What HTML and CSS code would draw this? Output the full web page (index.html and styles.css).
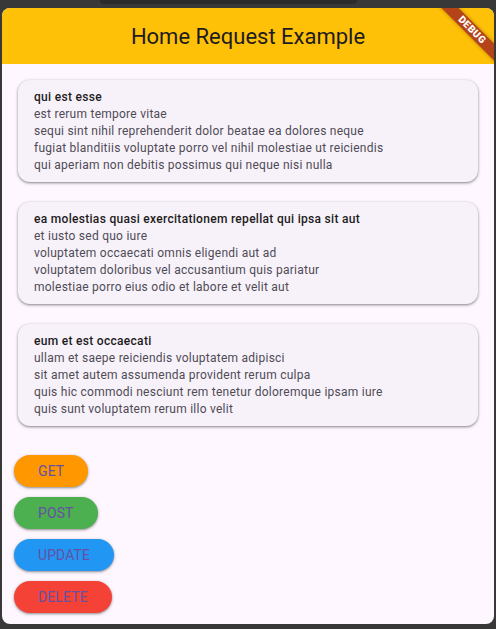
FILE: index.html
```html
<!DOCTYPE html>
<html>
<head>
<meta charset="utf-8">
<link rel="stylesheet" href="styles.css">
</head>
<body>
<div class="backdrop">
  <div class="topstrip"><div class="notch"></div></div>
  <div class="window">
    <header class="appbar">
      <h1 class="title">Home Request Example</h1>
      <div class="banner">DEBUG</div>
    </header>
    <main class="content">
      <section class="cards">
        <article class="card">
          <div class="card-title">qui est esse</div>
          <div class="card-body">est rerum tempore vitae<br>sequi sint nihil reprehenderit dolor beatae ea dolores neque<br>fugiat blanditiis voluptate porro vel nihil molestiae ut reiciendis<br>qui aperiam non debitis possimus qui neque nisi nulla</div>
        </article>
        <article class="card">
          <div class="card-title">ea molestias quasi exercitationem repellat qui ipsa sit aut</div>
          <div class="card-body">et iusto sed quo iure<br>voluptatem occaecati omnis eligendi aut ad<br>voluptatem doloribus vel accusantium quis pariatur<br>molestiae porro eius odio et labore et velit aut</div>
        </article>
        <article class="card">
          <div class="card-title">eum et est occaecati</div>
          <div class="card-body">ullam et saepe reiciendis voluptatem adipisci<br>sit amet autem assumenda provident rerum culpa<br>quis hic commodi nesciunt rem tenetur doloremque ipsam iure<br>quis sunt voluptatem rerum illo velit</div>
        </article>
      </section>
      <section class="buttons">
        <button class="btn btn-get">GET</button>
        <button class="btn btn-post">POST</button>
        <button class="btn btn-update">UPDATE</button>
        <button class="btn btn-delete">DELETE</button>
      </section>
    </main>
  </div>
</div>
</body>
</html>
```
FILE: styles.css
```css
* { box-sizing: border-box; }
html, body {
  margin: 0;
  padding: 0;
  background: #383838;
  width: 496px;
  height: 629px;
  overflow: hidden;
  font-family: Roboto, "Noto Sans", sans-serif;
}
.backdrop {
  display: flex;
  flex-direction: column;
  height: 629px;
}
.topstrip {
  height: 8px;
  display: flex;
}
.notch {
  margin-left: 100px;
  width: 257px;
  height: 4px;
  background: #2b2b2b;
  border-radius: 0 0 6px 6px;
}
.window {
  margin: 0 2px;
  height: 616px;
  border-radius: 8px;
  overflow: hidden;
  background: #FEF7FF;
  display: flex;
  flex-direction: column;
}
.appbar {
  position: relative;
  height: 56px;
  flex: none;
  background: #FFC107;
  display: flex;
  align-items: center;
  justify-content: center;
  overflow: hidden;
}
.title {
  margin: 0;
  font-size: 22px;
  font-weight: 400;
  color: #1D1B20;
  letter-spacing: 0;
}
.banner {
  position: absolute;
  top: 16px;
  right: -23px;
  width: 90px;
  height: 12px;
  line-height: 12px;
  transform: rotate(45deg);
  background: #B5431A;
  color: #fff;
  font-size: 10px;
  font-weight: 900;
  text-align: center;
  letter-spacing: 0.5px;
  box-shadow: 0 0 4px rgba(0,0,0,0.35);
}
.content {
  padding: 16px 0 0 0;
  display: flex;
  flex-direction: column;
}
.cards {
  display: flex;
  flex-direction: column;
  gap: 20px;
  padding: 0 16px;
}
.card {
  background: #F7F2FA;
  border-radius: 12px;
  padding: 8.5px 16px;
  box-shadow: 0 1px 2px rgba(0,0,0,0.3), 0 1px 3px 1px rgba(0,0,0,0.15);
  font-size: 12px;
  line-height: 17px;
  letter-spacing: 0.25px;
}
.card-title {
  color: #1D1B20;
  font-weight: 500;
  letter-spacing: 0.3px;
}
.card-body {
  color: #4F4B55;
}
.buttons {
  margin-top: 29px;
  padding: 0 12px;
  display: flex;
  flex-direction: column;
  align-items: flex-start;
  gap: 10px;
}
.btn {
  height: 32px;
  padding: 0 24px;
  border: none;
  border-radius: 16px;
  font-family: Roboto, sans-serif;
  font-size: 14px;
  font-weight: 400;
  letter-spacing: 0.1px;
  color: #6750A4;
  box-shadow: 0 1px 2px rgba(0,0,0,0.3), 0 1px 3px 1px rgba(0,0,0,0.12);
}
.btn-get { background: #FF9800; }
.btn-post { background: #4CAF50; }
.btn-update { background: #2196F3; }
.btn-delete { background: #F44336; }
```
